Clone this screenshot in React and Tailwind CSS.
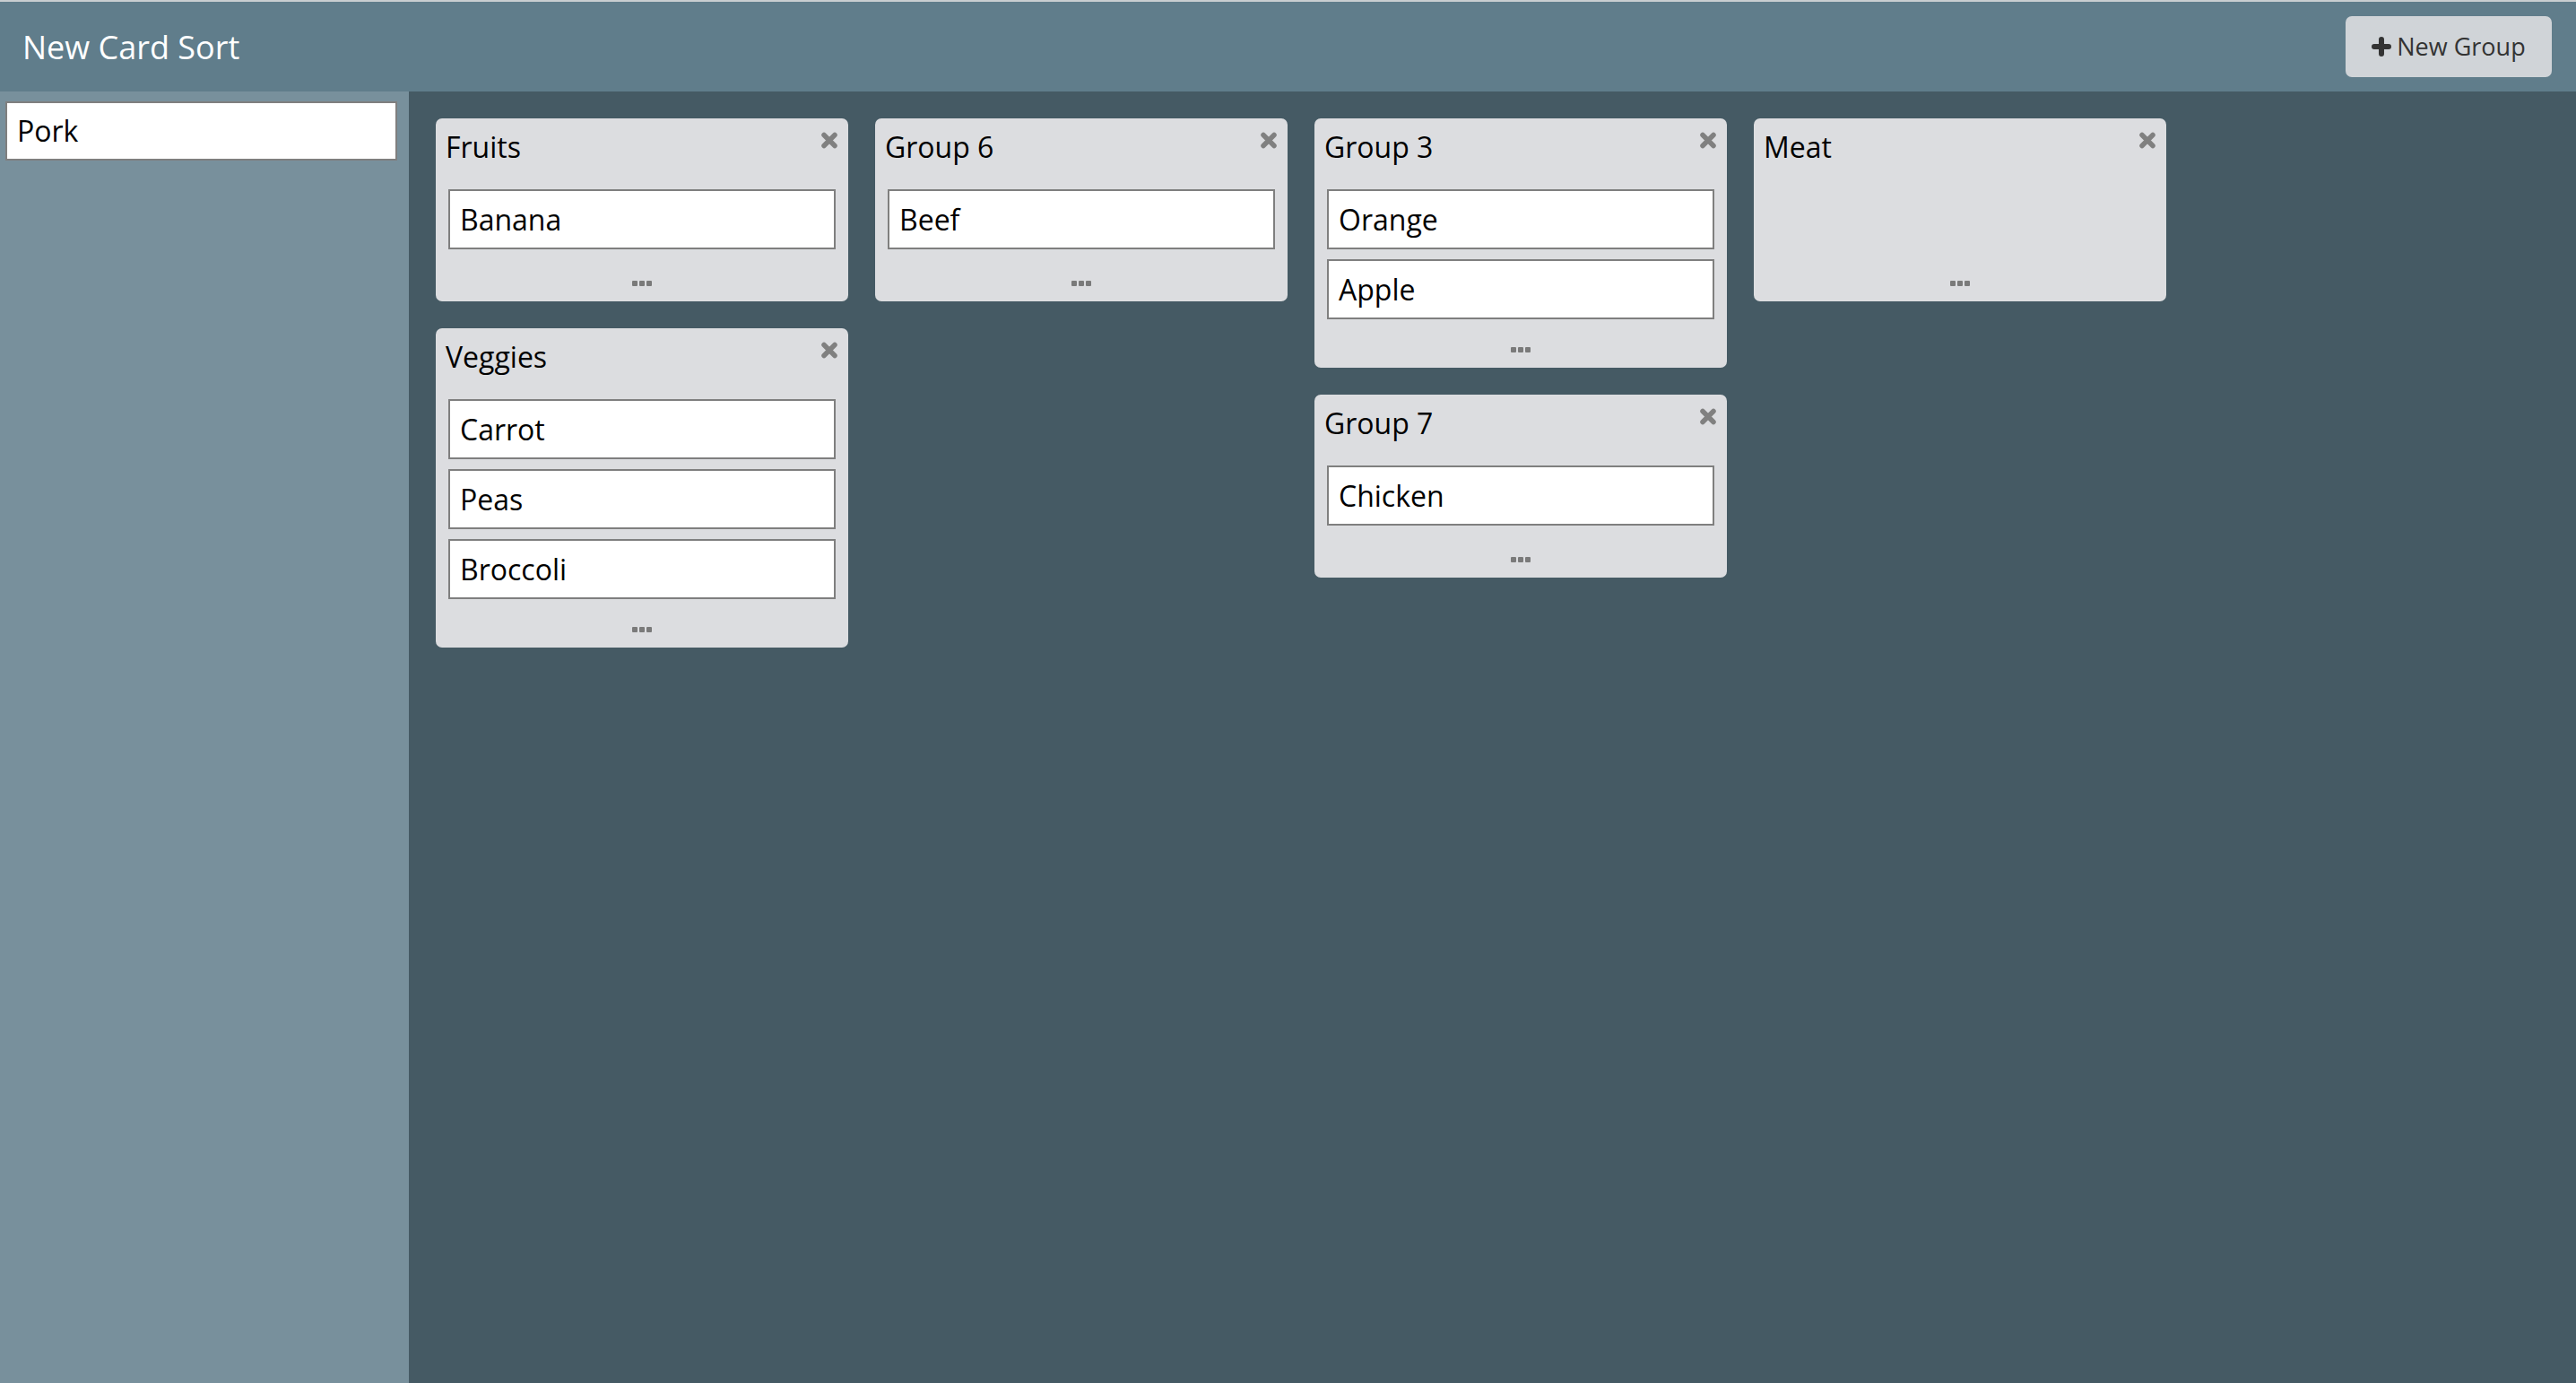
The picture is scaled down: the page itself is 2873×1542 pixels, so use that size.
const groups = [
  [
    { title: "Fruits", items: ["Banana"] },
    { title: "Veggies", items: ["Carrot", "Peas", "Broccoli"] },
  ],
  [{ title: "Group 6", items: ["Beef"] }],
  [
    { title: "Group 3", items: ["Orange", "Apple"] },
    { title: "Group 7", items: ["Chicken"] },
  ],
  [{ title: "Meat", items: [] }],
];

function CloseIcon() {
  return (
    <svg width="18" height="19" viewBox="0 0 18 19" className="block">
      <path d="M3 3.5 L15 15.5 M15 3.5 L3 15.5" stroke="#808080" strokeWidth="5.5" strokeLinecap="round" />
    </svg>
  );
}

function PlusIcon() {
  return (
    <svg width="22" height="22" viewBox="0 0 22 22" className="block">
      <path d="M11 3 V19 M3 11 H19" stroke="#333" strokeWidth="6" strokeLinecap="round" />
    </svg>
  );
}

function Card({ text }) {
  return (
    <div className="h-[67px] border-2 border-[#7f7f7f] bg-white pl-[11px] flex items-center text-[32px] text-black leading-[44px]">
      {text}
    </div>
  );
}

function Group({ title, items }) {
  return (
    <div className="relative w-[460px] rounded-[7px] bg-[#dcdde0] pt-[10px]">
      <div className="pl-[11px] text-[32px] leading-[44px] text-black">{title}</div>
      <button className="absolute top-[15px] right-[12px]">
        <CloseIcon />
      </button>

      <div className="mt-[25px] px-[14px] flex flex-col gap-[11px] min-h-[71px]">
        {items.map((item) => (
          <Card key={item} text={item} />
        ))}
      </div>

      {/* drag handle */}
      <div className="mt-[31px] mb-[17px] flex justify-center gap-[2px]">
        <span className="w-[6px] h-[6px] rounded-[1px] bg-[#7a7a7a]" />
        <span className="w-[6px] h-[6px] rounded-[1px] bg-[#7a7a7a]" />
        <span className="w-[6px] h-[6px] rounded-[1px] bg-[#7a7a7a]" />
      </div>
    </div>
  );
}

export default function App() {
  return (
    <div className="h-[1542px] flex flex-col font-['Open_Sans',sans-serif]">
      {/* Header */}
      <div className="h-[102px] shrink-0 border-t-2 border-[#c9ced1] bg-[#607d8b] flex items-center justify-between pl-[25px] pr-[27px]">
        <h1 className="text-[36px] leading-[49px] text-white">New Card Sort</h1>
        <button className="h-[68px] w-[230px] rounded-[7px] bg-[#d0d4d8] flex items-center justify-center gap-[6px] text-[27px] text-[#333]">
          <PlusIcon /> New Group
        </button>
      </div>

      <div className="flex flex-1">
        {/* Unsorted cards */}
        <div className="w-[456px] shrink-0 bg-[#78909c] pt-[11px] pl-[6px]">
          <div className="w-[437px] h-[66px] border-2 border-[#7f7f7f] bg-white pl-[11px] flex items-center text-[32px] text-black">
            Pork
          </div>
        </div>

        {/* Groups */}
        <div className="flex-1 bg-[#455a64] p-[30px] flex items-start gap-[30px]">
          {groups.map((col, i) => (
            <div key={i} className="flex flex-col gap-[30px]">
              {col.map((g) => (
                <Group key={g.title} title={g.title} items={g.items} />
              ))}
            </div>
          ))}
        </div>
      </div>
    </div>
  );
}
